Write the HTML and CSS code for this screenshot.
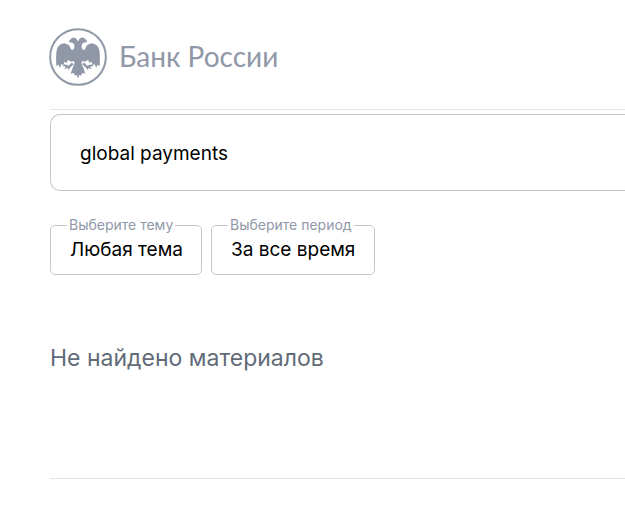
FILE: index.html
```html
<!DOCTYPE html>
<html lang="ru">
<head>
  <meta charset="utf-8">
  <meta name="viewport" content="width=device-width, initial-scale=1">
  <title>Поиск | Банк России</title>
  <link rel="stylesheet" href="styles.css">
</head>
<body>

  <header class="header">
    <a href="#" class="logo">
      <svg class="logo-icon" viewBox="0 0 174 174" aria-hidden="true">
        <circle cx="87" cy="87" r="83.5" fill="none" stroke="currentColor" stroke-width="6"/>
        <g id="eagle" fill="currentColor">
          <path d="M88 70 L74 66 Q78 56 75 48 Q71 42 60 43 Q60 36 65 34 Q68 28 76 29 Q86 31 88 46 Z"/>
          <path d="M88 62 L75 62 Q71 68 66 64 Q62 48 46 46 Q30 48 24 62 Q20 78 22 114 L29 110 L32 119 L38 108 L43 112 L46 101 L52 105 L57 96 L67 101 L74 99 L77 106 L71 119 L65 137 L74 135 L78 143 L83 141 L88 151 Z"/>
          <path d="M67 104 L60 113 L47 109 L40 114 L51 116 L45 124 L56 120 L58 126 L63 119 L75 108 Z"/>
        </g>
        <use href="#eagle" transform="translate(174 0) scale(-1 1)"/>
      </svg>
      <span class="logo-text">Банк России</span>
    </a>
  </header>

  <main class="content">
    <form class="search">
      <input type="text" class="search-input" value="global payments" aria-label="Поиск">

      <div class="filters">
        <fieldset class="filter">
          <legend><label for="theme">Выберите тему</label></legend>
          <select id="theme">
            <option>Любая тема</option>
          </select>
        </fieldset>
        <fieldset class="filter">
          <legend><label for="period">Выберите период</label></legend>
          <select id="period">
            <option>За все время</option>
          </select>
        </fieldset>
      </div>
    </form>

    <p class="empty">Не найдено материалов</p>
  </main>

</body>
</html>
```

FILE: styles.css
```css
* {
  box-sizing: border-box;
}
body {
  margin: 0;
  padding-left: 50px;
  background: #fff;
  color: #000;
  font-family: Inter, "Liberation Sans", sans-serif;
}
.header {
  padding: 28px 0 23px;
  border-bottom: 1px solid #e6e6e6;
}
.logo {
  display: flex;
  align-items: center;
  gap: 12px;
  margin-left: -1px;
  color: #9098a8;
  text-decoration: none;
}
.logo-icon {
  width: 58px;
  height: 58px;
}
.logo-text {
  padding-bottom: 2px;
  font-family: Lato, sans-serif;
  font-size: 28px;
  line-height: 32px;
}
.content {
  border-bottom: 1px solid #e6e6e6;
  padding: 4px 0 104px;
}
.search-input {
  display: block;
  width: 100%;
  height: 77px;
  padding: 2px 29px 0;
  border: 1px solid #c4c6cc;
  border-right: none;
  border-radius: 10px 0 0 10px;
  font: inherit;
  font-size: 19px;
}
.filters {
  display: flex;
  gap: 9px;
  margin-top: 26px;
}
.filter {
  margin: 0;
  padding: 0 18px 9px 19px;
  border: 1px solid #c4c6cc;
  border-radius: 5px;
}
.filter legend {
  margin-left: -3px;
  padding: 0 2px;
  color: #9098a8;
  font-size: 14px;
  line-height: 16px;
}
.filter select {
  display: block;
  height: 32px;
  padding: 0;
  border: none;
  background: none;
  color: #000;
  font: inherit;
  font-size: 19px;
  appearance: none;
}
.empty {
  margin: 67px 0 0;
  color: #626b78;
  font-size: 23px;
  line-height: 32px;
}
```
